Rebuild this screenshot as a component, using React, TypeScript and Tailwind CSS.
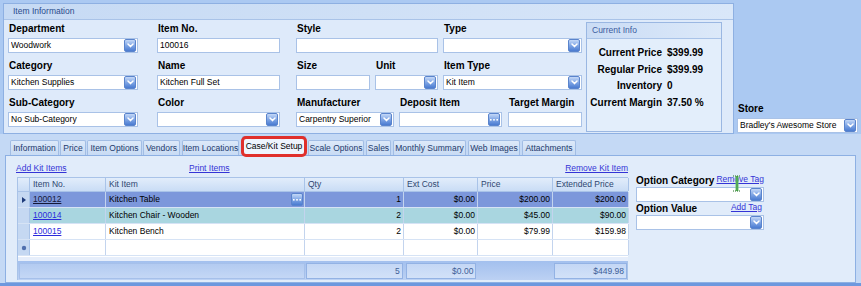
import React from "react";

type Kind = "text" | "drop" | "dots";

const Chevron = () => (
  <div className="w-[12px] h-[13px] shrink-0 rounded-[2px] border border-[#5a84cc] bg-gradient-to-b from-[#c4d8f7] via-[#80a6e5] to-[#4a7bd1] flex items-center justify-center">
    <svg width="7" height="5" viewBox="0 0 7 5">
      <path d="M1 1 L3.5 3.6 L6 1" stroke="#fff" strokeWidth="1.5" fill="none" strokeLinecap="round" strokeLinejoin="round" />
    </svg>
  </div>
);

const Dots = () => (
  <div className="w-[12px] h-[13px] shrink-0 rounded-[2px] border border-[#5a84cc] bg-gradient-to-b from-[#c4d8f7] via-[#80a6e5] to-[#4a7bd1] flex items-center justify-center">
    <svg width="8" height="2" viewBox="0 0 8 2">
      <rect x="0" y="0" width="1.6" height="1.6" fill="#fff" />
      <rect x="3.2" y="0" width="1.6" height="1.6" fill="#fff" />
      <rect x="6.4" y="0" width="1.6" height="1.6" fill="#fff" />
    </svg>
  </div>
);

const Input = ({ value, kind = "text" }: { value?: string; kind?: Kind }) => (
  <div className="h-[15px] bg-white border border-[#a9c2e7] flex items-center pl-[2px] pr-[1px] text-[8.5px] text-black">
    <span className="flex-1 whitespace-nowrap overflow-hidden">{value}</span>
    {kind === "drop" && <Chevron />}
    {kind === "dots" && <Dots />}
  </div>
);

const Field = ({ label, value, kind, className = "" }: { label: string; value?: string; kind?: Kind; className?: string }) => (
  <div className={`flex flex-col ${className}`}>
    <div className="h-[12px] leading-[12px] mb-[3px] pl-[1px] text-[10px] font-bold text-black whitespace-nowrap">{label}</div>
    <Input value={value} kind={kind} />
  </div>
);

const tabs = [
  { t: "Information", c: "w-[49px]" },
  { t: "Price", c: "w-[26px] ml-[1px]" },
  { t: "Item Options", c: "w-[55px] ml-[1px]" },
  { t: "Vendors", c: "w-[37px] ml-[1px]" },
  { t: "Item Locations", c: "w-[57px] ml-[2px]" },
  { t: "Case/Kit Setup", c: "w-[64px] ml-[3px]", active: true },
  { t: "Scale Options", c: "w-[56px] ml-[2px]" },
  { t: "Sales", c: "w-[25px] ml-[2px]" },
  { t: "Monthly Summary", c: "w-[73px] ml-[2px]" },
  { t: "Web Images", c: "w-[52px] ml-[2px]" },
  { t: "Attachments", c: "w-[54px] ml-[2px]" },
];

const rows = [
  { no: "100012", item: "Kitchen Table", qty: "1", cost: "$0.00", price: "$200.00", ext: "$200.00", bg: "bg-[#7c97db]", sel: true },
  { no: "100014", item: "Kitchen Chair - Wooden", qty: "2", cost: "$0.00", price: "$45.00", ext: "$90.00", bg: "bg-[#a9d6e0]" },
  { no: "100015", item: "Kitchen Bench", qty: "2", cost: "$0.00", price: "$79.99", ext: "$159.98", bg: "bg-white" },
];

const cols = "grid grid-cols-[12px_76px_199px_99px_74px_75px_76px]";

export default function App() {
  return (
    <div className="w-[861px] h-[286px] overflow-hidden bg-[#abc9f2] font-['Liberation_Sans',Arial,sans-serif] flex flex-col">
      {/* Top area */}
      <div className="flex pt-[3px] pl-[3px] h-[134px]">
        <div className="w-[731px] h-[131px] border border-[#8eb0e2] bg-[#deeafa] flex flex-col">
          <div className="h-[16px] shrink-0 bg-gradient-to-r from-[#c6daf4] via-[#cfe0f6] to-[#d9e7f9] border-b border-[#a9c3e8] pl-[9px] text-[8.5px] leading-[15px] text-[#2a4b8c]">
            Item Information
          </div>
          <div className="flex pl-[4px]">
            <div className="w-[130px] flex flex-col gap-[7px] pt-[3px]">
              <Field label="Department" value="Woodwork" kind="drop" />
              <Field label="Category" value="Kitchen Supplies" kind="drop" />
              <Field label="Sub-Category" value="No Sub-Category" kind="drop" />
            </div>
            <div className="w-[123px] ml-[19px] flex flex-col gap-[7px] pt-[3px]">
              <Field label="Item No." value="100016" />
              <Field label="Name" value="Kitchen Full Set" />
              <Field label="Color" kind="drop" />
            </div>
            <div className="w-[286px] ml-[16px] flex flex-col gap-[7px] pt-[3px]">
              <div className="flex">
                <Field label="Style" className="w-[142px]" />
                <Field label="Type" kind="drop" className="w-[139px] ml-[5px]" />
              </div>
              <div className="flex">
                <Field label="Size" className="w-[74px]" />
                <Field label="Unit" kind="drop" className="w-[63px] ml-[5px]" />
                <Field label="Item Type" value="Kit Item" kind="drop" className="w-[139px] ml-[5px]" />
              </div>
              <div className="flex">
                <Field label="Manufacturer" value="Carpentry Superior" kind="drop" className="w-[98px]" />
                <Field label="Deposit Item" kind="dots" className="w-[103px] ml-[5px]" />
                <Field label="Target Margin" className="w-[74px] ml-[6px]" />
              </div>
            </div>
            <div className="w-[136px] h-[110px] ml-[4px] mt-[2px] border border-[#9ab7e2] bg-[#e3eefb] flex flex-col">
              <div className="h-[16px] bg-gradient-to-r from-[#cadcf5] to-[#dce9f9] border-b border-[#a9c3e8] pl-[5px] text-[8.5px] leading-[15px] text-[#3b5b9e]">
                Current Info
              </div>
              <div className="grid grid-cols-[75px_auto] gap-x-[5px] pt-[6px] text-[10px] font-bold text-black leading-[16.5px] whitespace-nowrap">
                <div className="text-right">Current Price</div>
                <div>$399.99</div>
                <div className="text-right">Regular Price</div>
                <div>$399.99</div>
                <div className="text-right">Inventory</div>
                <div>0</div>
                <div className="text-right">Current Margin</div>
                <div>37.50 %</div>
              </div>
            </div>
          </div>
        </div>
        <div className="w-[121px] ml-[3px] flex flex-col justify-end pb-[1px]">
          <div className="h-[12px] leading-[12px] mb-[3px] pl-[1px] text-[10px] font-bold text-black">Store</div>
          <Input value="Bradley's Awesome Store" kind="drop" />
        </div>
      </div>

      {/* Tabs */}
      <div className="flex-1 bg-[#c4d9f5] flex flex-col">
        <div className="h-[21px] flex items-end pl-[10px]">
          {tabs.map((tab) => (
            <div
              key={tab.t}
              className={`${tab.c} relative rounded-t-[2px] border border-b-0 flex items-center justify-center whitespace-nowrap text-[8.5px] ${
                tab.active
                  ? "h-[20px] -mb-[1px] z-10 bg-[#eef4fd] border-[#8db0e3] text-black"
                  : "h-[15px] bg-gradient-to-b from-[#dde9f9] to-[#c8dbf4] border-[#a2bde4] text-[#1e3a6c]"
              }`}
            >
              {tab.t}
              {tab.active && (
                <div className="absolute -left-[2px] -right-[2px] -top-[1px] -bottom-[1px] border-[3px] border-[#e0302c] rounded-[5px]" />
              )}
            </div>
          ))}
        </div>

        <div className="mx-[5px] h-[128px] border border-[#8db0e3] bg-[#e1ecfa] flex">
          <div className="pl-[11px] pt-[6px] flex flex-col">
            <div className="h-[12px] mb-[3px] -ml-[1px] flex text-[8.5px] leading-[12px] text-[#3434d6] underline">
              <div className="w-[173px]">Add Kit Items</div>
              <div className="flex-1">Print Items</div>
              <div>Remove Kit Item</div>
            </div>
            <div className="w-[611px] border-l border-[#a9c3e8] text-[8.5px] text-black">
              <div className={`${cols} h-[15px] bg-gradient-to-b from-[#e2edfb] to-[#c9dcf5] border-t border-b border-[#a9c3e8] text-[#2e4670] leading-[13px]`}>
                <div className="border-r border-[#a9c3e8]" />
                <div className="border-r border-[#a9c3e8] pl-[3px]">Item No.</div>
                <div className="border-r border-[#a9c3e8] pl-[3px]">Kit Item</div>
                <div className="border-r border-[#a9c3e8] pl-[3px]">Qty</div>
                <div className="border-r border-[#a9c3e8] pl-[3px]">Ext Cost</div>
                <div className="border-r border-[#a9c3e8] pl-[3px]">Price</div>
                <div className="border-r border-[#a9c3e8] pl-[3px]">Extended Price</div>
              </div>
              {rows.map((r) => (
                <div key={r.no} className={`${cols} h-[16px] ${r.bg} border-b border-[#d6e3f5] leading-[15px]`}>
                  <div className="bg-[#c5d8f2] border-r border-[#a9c3e8] flex items-center justify-center">
                    {r.sel && (
                      <svg width="4" height="6" viewBox="0 0 4 6">
                        <path d="M0 0 L4 3 L0 6 Z" fill="#1f3b7a" />
                      </svg>
                    )}
                  </div>
                  <div className={`border-r border-[#c3d4ee] pl-[3px] underline ${r.sel ? "text-[#141838]" : "text-[#2b2bdc]"}`}>{r.no}</div>
                  <div className="border-r border-[#c3d4ee] pl-[3px] flex items-center justify-between pr-[1px]">
                    <span>{r.item}</span>
                    {r.sel && <Dots />}
                  </div>
                  <div className="border-r border-[#c3d4ee] text-right pr-[2px]">{r.qty}</div>
                  <div className="border-r border-[#c3d4ee] text-right pr-[2px]">{r.cost}</div>
                  <div className="border-r border-[#c3d4ee] text-right pr-[2px]">{r.price}</div>
                  <div className="border-r border-[#c3d4ee] text-right pr-[2px]">{r.ext}</div>
                </div>
              ))}
              <div className={`${cols} h-[16px] bg-white border-b border-[#d6e3f5]`}>
                <div className="bg-[#c5d8f2] border-r border-[#a9c3e8] flex items-center justify-center">
                  <svg width="6" height="6" viewBox="0 0 6 6">
                    <circle cx="3" cy="3" r="2.2" fill="#4f6fae" />
                  </svg>
                </div>
                <div className="border-r border-[#c3d4ee]" />
                <div className="border-r border-[#c3d4ee]" />
                <div className="border-r border-[#c3d4ee]" />
                <div className="border-r border-[#c3d4ee]" />
                <div className="border-r border-[#c3d4ee]" />
                <div className="border-r border-[#c3d4ee]" />
              </div>
              <div className="h-[5px] bg-[#e6eefb] border-t border-white" />
              <div className="h-[19px] bg-gradient-to-b from-[#a3c0ee] to-[#bcd1f3] flex items-center text-[#3e5f98] border-r border-[#a9c3e8]">
                <div className="w-[288px] h-[16px] ml-[1px] bg-gradient-to-b from-[#b3cbf1] to-[#c4d7f5] border border-[#a6c0ea]" />
                <div className="w-[97px] h-[16px] ml-[1px] bg-gradient-to-b from-[#c4d7f5] to-[#d2e1f8] border border-[#93b2e4] text-right pr-[2px] leading-[14px]">5</div>
                <div className="w-[71px] h-[16px] ml-[3px] bg-gradient-to-b from-[#c4d7f5] to-[#d2e1f8] border border-[#93b2e4] text-right pr-[2px] leading-[14px]">$0.00</div>
                <div className="w-[73px] h-[16px] ml-[78px] bg-gradient-to-b from-[#c4d7f5] to-[#d2e1f8] border border-[#93b2e4] text-right pr-[2px] leading-[14px]">$449.98</div>
              </div>
            </div>
          </div>

          <div className="ml-[8px] pt-[19px] w-[128px] flex flex-col relative">
            <div className="h-[12px] flex items-end justify-between">
              <span className="text-[10px] font-bold text-black leading-[12px] whitespace-nowrap">Option Category</span>
              <span className="text-[8.5px] text-[#3434d6] underline leading-[11px] mb-[2px] whitespace-nowrap">Remove Tag</span>
            </div>
            <Input kind="drop" />
            <div className="h-[12px] mt-[1px] flex items-end justify-between">
              <span className="text-[10px] font-bold text-black leading-[12px] whitespace-nowrap">Option Value</span>
              <span className="text-[8.5px] text-[#3434d6] underline leading-[11px] mb-[2px] mr-[2px] whitespace-nowrap">Add Tag</span>
            </div>
            <Input kind="drop" />
            <svg className="absolute left-[96px] top-[19px]" width="10" height="17" viewBox="0 0 10 17">
              <rect x="3.5" y="1" width="3" height="15" fill="#6fbf6f" />
              <path d="M1 1 H9 M1 16 H9" stroke="#1f6f1f" strokeWidth="1" strokeDasharray="1 1" />
              <path d="M5 1 V16" stroke="#2f8f2f" strokeWidth="0.8" />
            </svg>
          </div>
        </div>
        <div className="h-[3px] mt-auto bg-[#6d98de]" />
      </div>
    </div>
  );
}
